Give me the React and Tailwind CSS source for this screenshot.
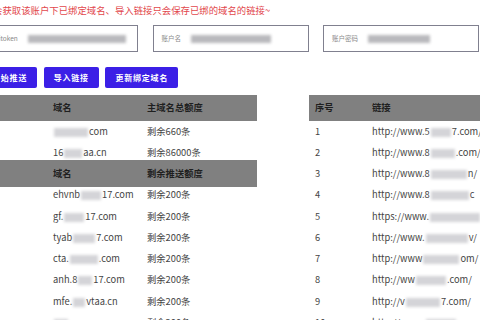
const leftRows = [
  { pre: "", blur: 34, post: "com", quota: "剩余660条" },
  { pre: "16", blur: 18, post: "aa.cn", quota: "剩余86000条" },
  { pre: "", blur: 0, post: "", quota: "" },
  { pre: "ehvnb", blur: 20, post: "17.com", quota: "剩余200条" },
  { pre: "gf.", blur: 20, post: "17.com", quota: "剩余200条" },
  { pre: "tyab", blur: 22, post: "7.com", quota: "剩余200条" },
  { pre: "cta.", blur: 28, post: ".com", quota: "剩余200条" },
  { pre: "anh.8", blur: 14, post: "17.com", quota: "剩余200条" },
  { pre: "mfe.", blur: 12, post: "vtaa.cn", quota: "剩余200条" },
  { pre: "", blur: 14, post: "", quota: "剩余200条" },
];

const rightRows = [
  { pre: "http://www.5", blur: 20, post: "7.com/" },
  { pre: "http://www.8", blur: 24, post: ".com/" },
  { pre: "http://www.8", blur: 36, post: "n/" },
  { pre: "http://www.8", blur: 38, post: "c" },
  { pre: "https://www.", blur: 50, post: "" },
  { pre: "http://www.", blur: 42, post: "v/" },
  { pre: "http://www", blur: 36, post: "om/" },
  { pre: "http://ww", blur: 30, post: ".com/" },
  { pre: "http://v", blur: 34, post: "7.com/" },
  { pre: "http://www.", blur: 30, post: "" },
];

function Blur({ w }) {
  if (!w) return null;
  return (
    <span
      className="inline-block h-[9px] bg-[#d4d4d8] blur-[1.5px] align-middle mx-[1px]"
      style={{ width: w }}
    />
  );
}

function InputBox({ label, bar }) {
  return (
    <div className="w-[156px] h-[27px] border border-[#80808f] flex items-center pl-[8px] gap-[10px] shrink-0">
      <span className="text-[6.5px] text-[#8a8a8a] whitespace-nowrap">{label}</span>
      <span className="h-[8px] bg-[#b9b9bd] blur-[1.5px]" style={{ width: bar }} />
    </div>
  );
}

export default function App() {
  return (
    <div className="w-[480px] h-[320px] overflow-hidden bg-white font-['Noto_Sans_CJK_SC','Noto_Sans',sans-serif]">
      <div className="-ml-[7px] pt-[3px] text-[9.4px] leading-[14px] text-[#e2474c] whitespace-nowrap">
        会获取该账户下已绑定域名、导入链接只会保存已绑的域名的链接~
      </div>

      <div className="-ml-[18px] mt-[8px] flex gap-[14.5px]">
        <InputBox label="apitoken" bar={98} />
        <InputBox label="账户名" bar={80} />
        <InputBox label="账户密码" bar={62} />
      </div>

      <div className="-ml-[18px] mt-[15px] flex gap-[6.5px]">
        {["开始推送", "导入链接", "更新绑定域名"].map((t) => (
          <div
            key={t}
            className="h-[21px] px-[10px] rounded-[2px] bg-[#3b1fe6] text-white text-[8px] font-bold flex items-center tracking-[0.8px]"
          >
            {t}
          </div>
        ))}
      </div>

      <div className="mt-[7px] flex gap-[52px] text-[9.3px] text-[#444]">
        {/* left table */}
        <div className="relative -ml-[28px] w-[285px] shrink-0">
          <div className="h-[26px] bg-[#808080] grid grid-cols-[81px_94px_1fr] items-center font-bold text-[#1f1f1f]">
            <span className="pl-[8px]">序号</span>
            <span>域名</span>
            <span>主域名总额度</span>
          </div>
          {leftRows.map((r, i) => (
            <div key={i} className="h-[21.25px] grid grid-cols-[81px_94px_1fr] items-center whitespace-nowrap">
              <span className="pl-[8px]">{r.quota ? i + 1 : ""}</span>
              <span>
                {r.pre}
                <Blur w={r.blur} />
                {r.post}
              </span>
              <span>{r.quota}</span>
            </div>
          ))}
          {/* sticky header of the push-quota list */}
          <div className="absolute left-0 right-0 top-[65px] h-[27px] bg-[#808080] grid grid-cols-[81px_94px_1fr] items-center font-bold text-[#1f1f1f]">
            <span className="pl-[8px]">序号</span>
            <span>域名</span>
            <span>剩余推送额度</span>
          </div>
        </div>

        {/* right table */}
        <div className="w-[280px] shrink-0">
          <div className="h-[26px] bg-[#808080] grid grid-cols-[63px_1fr] items-center font-bold text-[#1f1f1f]">
            <span className="pl-[6px]">序号</span>
            <span>链接</span>
          </div>
          {rightRows.map((r, i) => (
            <div key={i} className="h-[21.25px] grid grid-cols-[63px_1fr] items-center whitespace-nowrap">
              <span className="pl-[6px]">{i + 1}</span>
              <span>
                {r.pre}
                <Blur w={r.blur} />
                {r.post}
              </span>
            </div>
          ))}
        </div>
      </div>
    </div>
  );
}
